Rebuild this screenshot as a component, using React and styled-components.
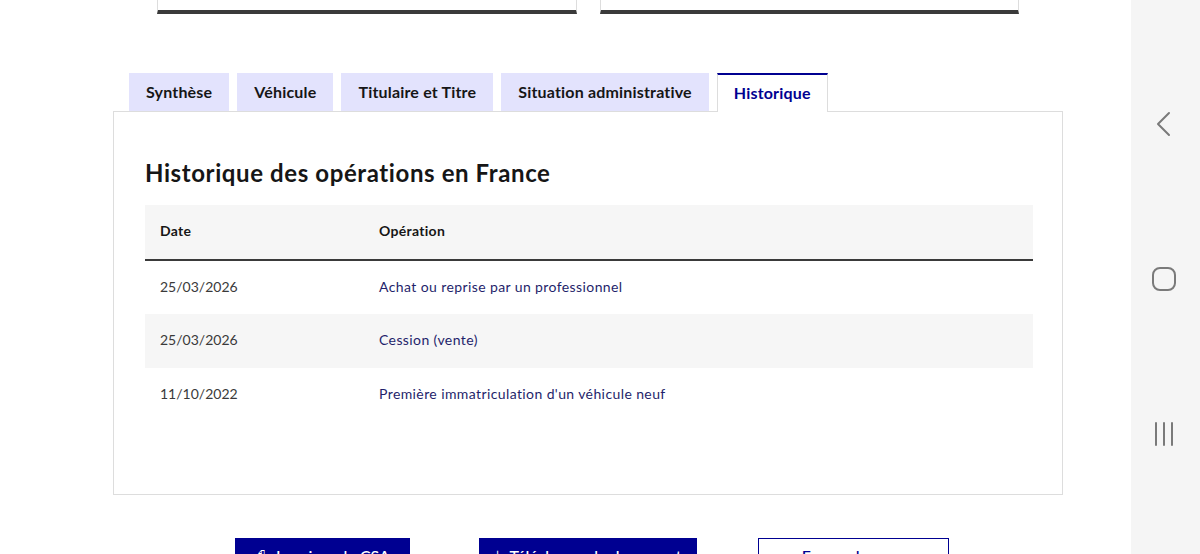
import styled, { createGlobalStyle } from 'styled-components'

const GlobalStyle = createGlobalStyle`
  html, body {
    margin: 0;
    padding: 0;
    background: #ffffff;
  }
  body {
    font-family: Lato, "Noto Sans", sans-serif;
    color: #161616;
  }
`

const Screen = styled.div`
  display: flex;
  width: 1200px;
  height: 554px;
  overflow: hidden;
`

const Page = styled.main`
  width: 1131px;
  height: 554px;
  overflow: hidden;
  background: #ffffff;
`

const NavBar = styled.nav`
  width: 69px;
  background: #f5f5f5;
  display: flex;
  flex-direction: column;
  align-items: center;
  padding: 111px 4px 0 0;
  box-sizing: border-box;
  gap: 129px;
`

const NavIcon = styled.svg`
  display: block;
  stroke: #7a7a7a;
  fill: none;
  stroke-width: 2;
  stroke-linecap: round;
  stroke-linejoin: round;
`

const CardRow = styled.div`
  display: flex;
  gap: 23px;
  padding-left: 157px;
`

const Card = styled.div`
  width: ${({ $w }) => $w}px;
  height: 10px;
  border: 1px solid #dddddd;
  border-top: none;
  border-bottom: 4px solid #3a3a3a;
  box-sizing: content-box;
`

const Tabs = styled.div`
  margin: 59px 0 0 113px;
  width: 950px;
`

const TabList = styled.div`
  display: flex;
  align-items: flex-start;
  gap: 8px;
  padding-left: 16px;
  position: relative;
  z-index: 1;
  margin-bottom: -1px;
`

const Tab = styled.div`
  box-sizing: border-box;
  padding: 0 16px 3px;
  display: flex;
  align-items: center;
  font-size: 16px;
  font-weight: 700;
  letter-spacing: 0.18px;
  background: ${({ $active }) => ($active ? '#ffffff' : '#e3e3fd')};
  color: ${({ $active }) => ($active ? '#000091' : '#161616')};
  border-top: 2px solid ${({ $active }) => ($active ? '#000091' : 'transparent')};
  border-left: 1px solid ${({ $active }) => ($active ? '#dddddd' : 'transparent')};
  border-right: 1px solid ${({ $active }) => ($active ? '#dddddd' : 'transparent')};
  height: ${({ $active }) => ($active ? '39px' : '38px')};
`

const Panel = styled.section`
  border: 1px solid #dddddd;
  padding: 45px 29px 72px 31px;
  height: 384px;
  box-sizing: border-box;
`

const Heading = styled.h2`
  margin: 0 0 16px;
  font-size: 24px;
  line-height: 32px;
  font-weight: 700;
  letter-spacing: 0.6px;
  color: #161616;
`

const Table = styled.table`
  width: 888px;
  border-collapse: collapse;
  font-size: 14px;
`

const HeadCell = styled.th`
  text-align: left;
  font-weight: 700;
  height: 55px;
  padding: 0 15px 4px;
  background: #f6f6f6;
  border-bottom: 2px solid #3a3a3a;
  box-sizing: border-box;
  letter-spacing: 0.3px;
  width: ${({ $w }) => ($w ? `${$w}px` : 'auto')};
  color: #161616;
`

const Row = styled.tr`
  background: ${({ $shade }) => ($shade ? '#f6f6f6' : '#ffffff')};
`

const Cell = styled.td`
  height: 54px;
  box-sizing: border-box;
  padding: 0 15px 3px;
  letter-spacing: ${({ $link }) => ($link ? '0.4px' : '0')};
  color: ${({ $link }) => ($link ? '#1f1f6b' : '#3a3a3a')};
`

const Actions = styled.div`
  display: flex;
  margin: 43px 0 0 235px;
`

const Button = styled.div`
  width: ${({ $w }) => $w}px;
  height: 40px;
  box-sizing: border-box;
  display: flex;
  align-items: flex-start;
  justify-content: center;
  padding-top: 7px;
  gap: 8px;
  font-size: 16px;
  font-weight: 500;
  background: ${({ $outline }) => ($outline ? '#ffffff' : '#000091')};
  color: ${({ $outline }) => ($outline ? '#000091' : '#ffffff')};
  border: 1px solid #000091;
  margin-right: ${({ $gap }) => ($gap ? `${$gap}px` : '0')};
`

const tabs = ['Synthèse', 'Véhicule', 'Titulaire et Titre', 'Situation administrative', 'Historique']

const operations = [
  { date: '25/03/2026', label: 'Achat ou reprise par un professionnel' },
  { date: '25/03/2026', label: 'Cession (vente)' },
  { date: '11/10/2022', label: "Première immatriculation d'un véhicule neuf" },
]

export default function App() {
  return (
    <>
      <GlobalStyle />
      <Screen>
        <Page>
          <CardRow>
            <Card $w={418} />
            <Card $w={417} />
          </CardRow>

          <Tabs>
            <TabList>
              {tabs.map((t) => (
                <Tab key={t} $active={t === 'Historique'}>
                  {t}
                </Tab>
              ))}
            </TabList>
            <Panel>
              <Heading>Historique des opérations en France</Heading>
              <Table>
                <thead>
                  <tr>
                    <HeadCell $w={219}>Date</HeadCell>
                    <HeadCell>Opération</HeadCell>
                  </tr>
                </thead>
                <tbody>
                  {operations.map((op, i) => (
                    <Row key={i} $shade={i % 2 === 1}>
                      <Cell>{op.date}</Cell>
                      <Cell $link>{op.label}</Cell>
                    </Row>
                  ))}
                </tbody>
              </Table>
            </Panel>
          </Tabs>

          <Actions>
            <Button $w={175} $gap={69}>
              <span>⎙</span> Imprimer le CSA
            </Button>
            <Button $w={218} $gap={61}>
              <span>⤓</span> Télécharger le document
            </Button>
            <Button $w={191} $outline>
              <span>‹</span> Fermer la page <span>›</span>
            </Button>
          </Actions>
        </Page>

        <NavBar>
          <NavIcon width="24" height="26" viewBox="0 0 24 26">
            <path d="M17 2 L6 13 L17 24" />
          </NavIcon>
          <NavIcon width="26" height="26" viewBox="0 0 26 26">
            <rect x="2" y="2" width="22" height="22" rx="7" />
          </NavIcon>
          <NavIcon width="24" height="26" viewBox="0 0 24 26">
            <path d="M4 2 V24 M12 2 V24 M20 2 V24" />
          </NavIcon>
        </NavBar>
      </Screen>
    </>
  )
}
